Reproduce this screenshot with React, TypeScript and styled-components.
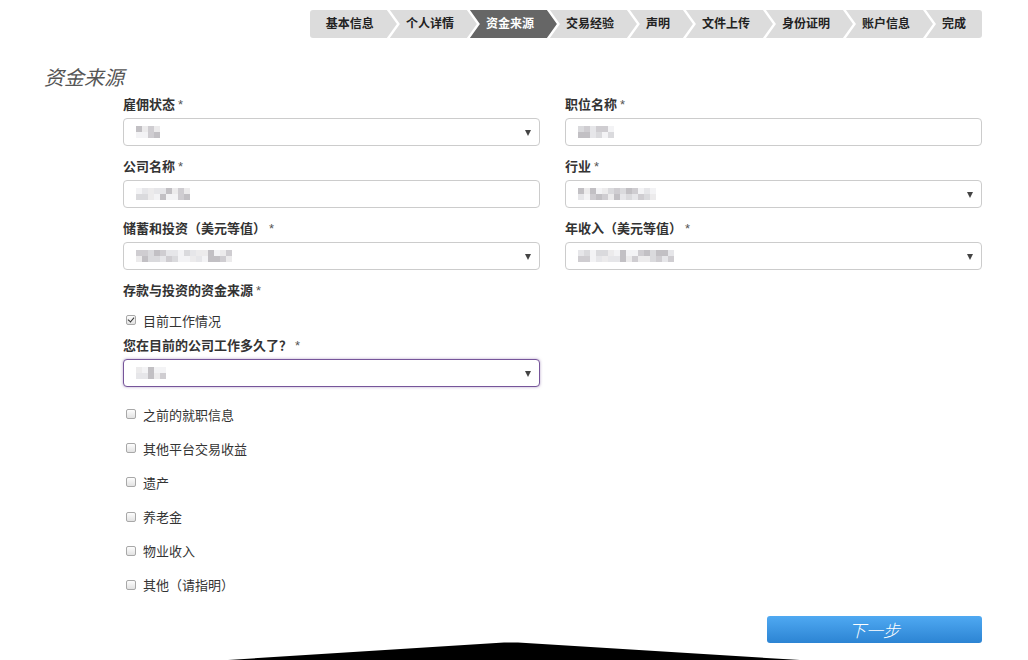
import React from "react";
import styled, { createGlobalStyle, css } from "styled-components";

const Global = createGlobalStyle`
  html, body { margin: 0; padding: 0; background: #fff; }
  body {
    font-family: "Liberation Sans", "Noto Sans CJK SC", sans-serif;
    color: #333;
    overflow: hidden;
  }
  * { box-sizing: border-box; }
`;

const Page = styled.div`
  width: 1028px;
  height: 660px;
  padding: 10px 46px 0 44px;
  overflow: hidden;
`;

const Steps = styled.ol`
  list-style: none;
  margin: 0;
  padding: 0;
  display: flex;
  justify-content: flex-end;
  height: 28px;
`;

const Step = styled.li<{ $active?: boolean; $first?: boolean; $last?: boolean }>`
  height: 28px;
  line-height: 28px;
  padding: 0 23px 0 16px;
  margin-left: -7px;
  font-size: 12px;
  font-weight: bold;
  white-space: nowrap;
  background: ${(p) => (p.$active ? "#666" : "#dcdcdc")};
  color: ${(p) => (p.$active ? "#fff" : "#222")};
  clip-path: polygon(0 0, calc(100% - 10px) 0, 100% 50%, calc(100% - 10px) 100%, 0 100%, 10px 50%);
  ${(p) =>
    p.$first &&
    css`
      margin-left: 0;
      border-radius: 3px 0 0 3px;
      clip-path: polygon(0 0, calc(100% - 10px) 0, 100% 50%, calc(100% - 10px) 100%, 0 100%);
    `}
  ${(p) =>
    p.$last &&
    css`
      padding-right: 16px;
      border-radius: 0 3px 3px 0;
      clip-path: polygon(0 0, 100% 0, 100% 100%, 0 100%, 10px 50%);
    `}
`;

const Title = styled.h2`
  margin: 28px 0 0;
  font-size: 20px;
  line-height: 24px;
  height: 24px;
  font-weight: normal;
  font-style: italic;
  color: #555;
`;

const Form = styled.div`
  margin: 6px 0 0 79px;
  display: grid;
  grid-template-columns: 417px 417px;
  column-gap: 25px;
  row-gap: 12px;
  align-items: start;
`;

const Field = styled.div`
  display: flex;
  flex-direction: column;
`;

const Label = styled.div`
  font-size: 13px;
  line-height: 18px;
  height: 18px;
  font-weight: bold;
  color: #333;
  margin-bottom: 4px;
  white-space: nowrap;
`;

const Star = styled.span`
  font-weight: normal;
  color: #555;
  margin-left: 3px;
`;

const Box = styled.div<{ $select?: boolean; $focus?: boolean }>`
  position: relative;
  height: 28px;
  border: 1px solid ${(p) => (p.$focus ? "#76559a" : "#ccc")};
  border-radius: 4px;
  background: #fff;
  display: flex;
  align-items: center;
  padding-left: 12px;
  ${(p) => p.$focus && css`box-shadow: 0 0 3px rgba(118, 85, 154, 0.55);`}
  ${(p) =>
    p.$select &&
    css`
      &::after {
        content: "";
        position: absolute;
        right: 8px;
        top: 11px;
        border-left: 3.5px solid transparent;
        border-right: 3.5px solid transparent;
        border-top: 6px solid #444;
      }
    `}
`;

const Mosaic = styled.span`
  display: grid;
  grid-auto-flow: column;
  grid-template-rows: 6px 6px;
  grid-auto-columns: 6px;
`;

const Cell = styled.span<{ $shade: number }>`
  background: ${(p) => ["#f3f3f5", "#e6e6e9", "#dadadd", "#cfcdd1", "#c2c0c4", "#ecebec"][p.$shade]};
`;

const Blur: React.FC<{ cols: number; seed: number }> = ({ cols, seed }) => {
  const cells: number[] = [];
  for (let i = 0; i < cols * 2; i++) {
    cells.push((i * 7 + seed * 3 + ((i * i + seed) % 5)) % 6);
  }
  return (
    <Mosaic>
      {cells.map((s, i) => (
        <Cell key={i} $shade={s} />
      ))}
    </Mosaic>
  );
};

const Full = styled.div`
  grid-column: 1 / 2;
  grid-row: 4;
  display: flex;
  flex-direction: column;
`;

const CheckRow = styled.label<{ $tight?: boolean }>`
  display: flex;
  align-items: center;
  height: 20px;
  padding-left: 3px;
  font-size: 13px;
  color: #333;
  white-space: nowrap;
  ${(p) => (p.$tight ? css`margin: 6px 0 7px;` : "")}
`;

const Tick = styled.span<{ $on?: boolean }>`
  position: relative;
  width: 10px;
  height: 10px;
  border: 1px solid #a8a8a8;
  border-radius: 2px;
  background: linear-gradient(#fdfdfd, #e2e2e2);
  margin-right: 7px;
  flex: none;
  ${(p) =>
    p.$on &&
    css`
      &::after {
        content: "";
        position: absolute;
        left: 2px;
        top: 0px;
        width: 3px;
        height: 5px;
        border-right: 1.5px solid #333;
        border-bottom: 1.5px solid #333;
        transform: rotate(40deg);
      }
    `}
`;

const CheckList = styled.div`
  display: flex;
  flex-direction: column;
  gap: 14.2px;
  margin-top: 17px;
`;

const Actions = styled.div`
  grid-column: 2 / 3;
  grid-row: 5;
  display: flex;
  justify-content: flex-end;
  margin-top: 9px;
`;

const NextButton = styled.button`
  width: 215px;
  height: 27px;
  border: none;
  border-radius: 3px;
  background: linear-gradient(#4fa9f2, #2c84d3);
  color: #fff;
  font-family: "Noto Sans CJK SC", sans-serif;
  font-size: 17px;
  font-style: italic;
  font-weight: 300;
  line-height: 27px;
  padding: 0;
`;

const Deco = styled.div`
  margin: -1px 0 0 184px;
  height: 40px;
  line-height: 0;
`;

const steps = ["基本信息", "个人详情", "资金来源", "交易经验", "声明", "文件上传", "身份证明", "账户信息", "完成"];
const others = ["之前的就职信息", "其他平台交易收益", "遗产", "养老金", "物业收入", "其他（请指明）"];

export default function App() {
  return (
    <Page>
      <Global />
      <Steps>
        {steps.map((s, i) => (
          <Step key={s} $active={i === 2} $first={i === 0} $last={i === steps.length - 1}>
            {s}
          </Step>
        ))}
      </Steps>
      <Title>资金来源</Title>
      <Form>
        <Field>
          <Label>雇佣状态<Star>*</Star></Label>
          <Box $select><Blur cols={4} seed={1} /></Box>
        </Field>
        <Field>
          <Label>职位名称<Star>*</Star></Label>
          <Box><Blur cols={6} seed={2} /></Box>
        </Field>
        <Field>
          <Label>公司名称<Star>*</Star></Label>
          <Box><Blur cols={9} seed={3} /></Box>
        </Field>
        <Field>
          <Label>行业<Star>*</Star></Label>
          <Box $select><Blur cols={13} seed={4} /></Box>
        </Field>
        <Field>
          <Label>储蓄和投资（美元等值）<Star>*</Star></Label>
          <Box $select><Blur cols={16} seed={5} /></Box>
        </Field>
        <Field>
          <Label>年收入（美元等值）<Star>*</Star></Label>
          <Box $select><Blur cols={16} seed={6} /></Box>
        </Field>
        <Full>
          <Label>存款与投资的资金来源<Star>*</Star></Label>
          <CheckRow $tight>
            <Tick $on />
            目前工作情况
          </CheckRow>
          <Label>您在目前的公司工作多久了？<Star>*</Star></Label>
          <Box $select $focus><Blur cols={5} seed={7} /></Box>
          <CheckList>
            {others.map((o) => (
              <CheckRow key={o}>
                <Tick />
                {o}
              </CheckRow>
            ))}
          </CheckList>
        </Full>
        <Actions>
          <NextButton>下一步</NextButton>
        </Actions>
      </Form>
      <Deco>
        <svg width="580" height="40" viewBox="0 0 580 40">
          <polygon points="0,18 276,0.4 290,0.4 572,18 572,40 0,40" fill="#000" />
        </svg>
      </Deco>
    </Page>
  );
}
